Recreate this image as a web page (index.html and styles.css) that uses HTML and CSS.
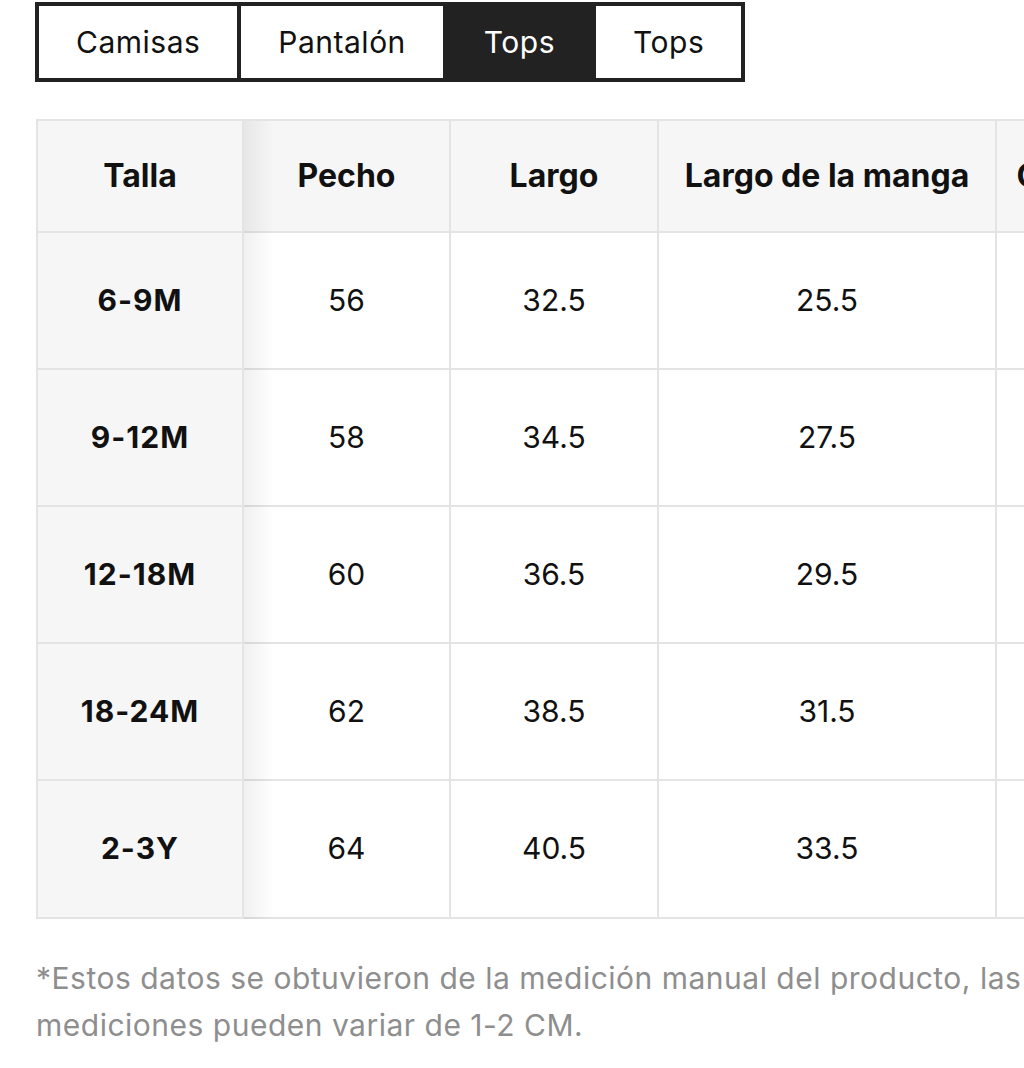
FILE: index.html
```html
<!DOCTYPE html>
<html lang="es">

<head>
    <meta charset="UTF-8">
    <meta name="viewport" content="width=device-width, initial-scale=1.0">
    <title>Guía de tallas</title>
    <link rel="stylesheet" href="styles.css">
</head>

<body>
    <div class="size-guide">
        <div class="tabs">
            <div class="tab">Camisas</div>
            <div class="tab">Pantalón</div>
            <div class="tab active">Tops</div>
            <div class="tab">Tops</div>
        </div>

        <div class="table-wrap">
            <table class="size-table">
                <thead>
                    <tr>
                        <th class="fixed c1">Talla</th>
                        <th class="c2">Pecho</th>
                        <th class="c3">Largo</th>
                        <th class="c4">Largo de la manga</th>
                        <th class="c5">Cintura</th>
                    </tr>
                </thead>
                <tbody>
                    <tr>
                        <td class="fixed">6-9M</td>
                        <td>56</td>
                        <td>32.5</td>
                        <td>25.5</td>
                        <td></td>
                    </tr>
                    <tr>
                        <td class="fixed">9-12M</td>
                        <td>58</td>
                        <td>34.5</td>
                        <td>27.5</td>
                        <td></td>
                    </tr>
                    <tr>
                        <td class="fixed">12-18M</td>
                        <td>60</td>
                        <td>36.5</td>
                        <td>29.5</td>
                        <td></td>
                    </tr>
                    <tr>
                        <td class="fixed">18-24M</td>
                        <td>62</td>
                        <td>38.5</td>
                        <td>31.5</td>
                        <td></td>
                    </tr>
                    <tr>
                        <td class="fixed">2-3Y</td>
                        <td>64</td>
                        <td>40.5</td>
                        <td>33.5</td>
                        <td></td>
                    </tr>
                </tbody>
            </table>
        </div>

        <p class="note">*Estos datos se obtuvieron de la medición manual del producto, las mediciones pueden variar de 1-2 CM.</p>
    </div>
</body>

</html>
```

FILE: styles.css
```css
body {
    margin: 0;
    padding: 0;
    background: #fff;
    color: #111;
    font-family: Inter, "Liberation Sans", Arial, sans-serif;
    overflow-x: hidden;
}

.size-guide {
    padding: 2px 0 0 35px;
}

/* pestañas */
.tabs {
    display: inline-flex;
    border: 4px solid #222;
    background: #fff;
}

.tab {
    height: 72px;
    line-height: 72px;
    padding: 0 37px;
    font-size: 30px;
    letter-spacing: 0.5px;
    color: #111;
}

.tab + .tab {
    border-left: 4px solid #222;
}

.tab.active {
    background: #222;
    color: #fff;
}

/* tabla de medidas */
.table-wrap {
    margin: 37px 0 0 1px;
    overflow: hidden;
}

.size-table {
    table-layout: fixed;
    width: 1117px;
    border-collapse: separate;
    border-spacing: 0;
    border-top: 2px solid #e4e4e4;
    border-left: 2px solid #e4e4e4;
}

.size-table th,
.size-table td {
    box-sizing: border-box;
    border-right: 2px solid #e4e4e4;
    border-bottom: 2px solid #e4e4e4;
    text-align: center;
    white-space: nowrap;
    padding-left: 0;
    padding-right: 0;
}

.size-table th {
    background: #f6f6f6;
    font-size: 32px;
    font-weight: 700;
    line-height: 38px;
    padding-top: 36px;
    padding-bottom: 36px;
}

.size-table td {
    font-size: 30px;
    font-weight: 400;
    line-height: 37px;
    padding-top: 49px;
    padding-bottom: 49px;
}

.size-table tbody tr:last-child td {
    padding-bottom: 50px;
}

.c1 { width: 206px; }
.c2 { width: 207px; }
.c3 { width: 208px; }
.c4 { width: 338px; }
.c5 { width: 156px; }

.fixed {
    position: sticky;
    left: 0;
    z-index: 1;
}

.size-table td.fixed {
    background: #f6f6f6;
    font-weight: 700;
    letter-spacing: 1px;
}

.fixed::after {
    content: "";
    position: absolute;
    top: 0;
    bottom: -2px;
    left: calc(100% + 2px);
    width: 30px;
    background: linear-gradient(to right, rgba(0, 0, 0, 0.06), rgba(0, 0, 0, 0));
    pointer-events: none;
}

.note {
    width: 1000px;
    margin: 36px 0 0 1px;
    font-size: 30px;
    line-height: 47px;
    letter-spacing: 0.5px;
    color: #8e8e8e;
}
```
